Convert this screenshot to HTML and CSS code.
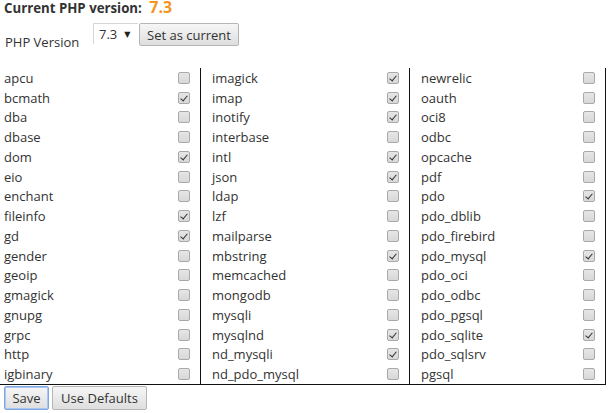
FILE: index.html
```html
<!DOCTYPE html>
<html>
<head>
<meta charset="utf-8">
<link rel="stylesheet" href="styles.css">
</head>
<body>
<div class="current"><span class="current-label">Current PHP version:</span> <span class="current-ver">7.3</span></div>
<div class="version-row">
  <span class="version-label">PHP Version</span>
  <span class="select">7.3<span class="arrow">&#9660;</span></span>
  <button class="btn">Set as current</button>
</div>
<div class="ext-table">
  <div class="col col1">
    <label class="ext"><span>apcu</span><input type="checkbox"></label>
    <label class="ext"><span>bcmath</span><input type="checkbox" checked></label>
    <label class="ext"><span>dba</span><input type="checkbox"></label>
    <label class="ext"><span>dbase</span><input type="checkbox"></label>
    <label class="ext"><span>dom</span><input type="checkbox" checked></label>
    <label class="ext"><span>eio</span><input type="checkbox"></label>
    <label class="ext"><span>enchant</span><input type="checkbox"></label>
    <label class="ext"><span>fileinfo</span><input type="checkbox" checked></label>
    <label class="ext"><span>gd</span><input type="checkbox" checked></label>
    <label class="ext"><span>gender</span><input type="checkbox"></label>
    <label class="ext"><span>geoip</span><input type="checkbox"></label>
    <label class="ext"><span>gmagick</span><input type="checkbox"></label>
    <label class="ext"><span>gnupg</span><input type="checkbox"></label>
    <label class="ext"><span>grpc</span><input type="checkbox"></label>
    <label class="ext"><span>http</span><input type="checkbox"></label>
    <label class="ext"><span>igbinary</span><input type="checkbox"></label>
  </div>
  <div class="col col2">
    <label class="ext"><span>imagick</span><input type="checkbox" checked></label>
    <label class="ext"><span>imap</span><input type="checkbox" checked></label>
    <label class="ext"><span>inotify</span><input type="checkbox" checked></label>
    <label class="ext"><span>interbase</span><input type="checkbox"></label>
    <label class="ext"><span>intl</span><input type="checkbox" checked></label>
    <label class="ext"><span>json</span><input type="checkbox" checked></label>
    <label class="ext"><span>ldap</span><input type="checkbox"></label>
    <label class="ext"><span>lzf</span><input type="checkbox"></label>
    <label class="ext"><span>mailparse</span><input type="checkbox"></label>
    <label class="ext"><span>mbstring</span><input type="checkbox" checked></label>
    <label class="ext"><span>memcached</span><input type="checkbox"></label>
    <label class="ext"><span>mongodb</span><input type="checkbox"></label>
    <label class="ext"><span>mysqli</span><input type="checkbox"></label>
    <label class="ext"><span>mysqlnd</span><input type="checkbox" checked></label>
    <label class="ext"><span>nd_mysqli</span><input type="checkbox" checked></label>
    <label class="ext"><span>nd_pdo_mysql</span><input type="checkbox"></label>
  </div>
  <div class="col col3">
    <label class="ext"><span>newrelic</span><input type="checkbox"></label>
    <label class="ext"><span>oauth</span><input type="checkbox"></label>
    <label class="ext"><span>oci8</span><input type="checkbox"></label>
    <label class="ext"><span>odbc</span><input type="checkbox"></label>
    <label class="ext"><span>opcache</span><input type="checkbox"></label>
    <label class="ext"><span>pdf</span><input type="checkbox"></label>
    <label class="ext"><span>pdo</span><input type="checkbox" checked></label>
    <label class="ext"><span>pdo_dblib</span><input type="checkbox"></label>
    <label class="ext"><span>pdo_firebird</span><input type="checkbox"></label>
    <label class="ext"><span>pdo_mysql</span><input type="checkbox" checked></label>
    <label class="ext"><span>pdo_oci</span><input type="checkbox"></label>
    <label class="ext"><span>pdo_odbc</span><input type="checkbox"></label>
    <label class="ext"><span>pdo_pgsql</span><input type="checkbox"></label>
    <label class="ext"><span>pdo_sqlite</span><input type="checkbox" checked></label>
    <label class="ext"><span>pdo_sqlsrv</span><input type="checkbox"></label>
    <label class="ext"><span>pgsql</span><input type="checkbox"></label>
  </div>
</div>
<div class="actions">
  <button class="btn btn-save">Save</button>
  <button class="btn btn-use">Use Defaults</button>
</div>
</body>
</html>
```

FILE: styles.css
```css
html, body {
  margin: 0;
  padding: 0;
  background: #fff;
}
body {
  font-family: "Open Sans", "DejaVu Sans", sans-serif;
  font-size: 13px;
  color: #333;
  width: 610px;
}
.current {
  padding: 1px 0 0 4px;
  height: 19px;
  line-height: 12px;
  white-space: nowrap;
}
.current-label {
  font-weight: 700;
  font-size: 13.25px;
  color: #333;
}
.current-ver {
  font-weight: 700;
  font-size: 16px;
  color: #f7941d;
  margin-left: 4px;
}
.version-row {
  display: flex;
  align-items: flex-start;
  padding-left: 5px;
  margin-top: 3px;
  height: 45px;
}
.version-label {
  margin-top: 10px;
  width: 88px;
}
.select {
  box-sizing: border-box;
  width: 45px;
  height: 21px;
  border: 1px solid #d6d6d6;
  border-right: none;
  border-bottom: none;
  background: #fff;
  padding-left: 5px;
  line-height: 19px;
  display: flex;
  align-items: center;
  gap: 7px;
}
.arrow {
  font-size: 8px;
  color: #222;
  line-height: 1;
}
.btn {
  font-family: "Open Sans", "DejaVu Sans", sans-serif;
  font-size: 13px;
  color: #333;
  box-sizing: border-box;
  height: 23px;
  padding: 0 7px;
  border: 1px solid #b5b5b5;
  border-radius: 2px;
  background: linear-gradient(#f6f6f6, #dedede);
  line-height: 20px;
  margin: 0 0 0 1px;
}
.ext-table {
  display: flex;
  border-bottom: 1px solid #111;
  width: 606px;
}
.col {
  display: flex;
  flex-direction: column;
  border-right: 1px solid #111;
  box-sizing: border-box;
  padding-right: 10px;
}
.col1 { width: 201px; padding-left: 4px; }
.col2 { width: 209px; padding-left: 11px; }
.col3 { width: 196px; padding-left: 11px; }
.ext {
  height: 19.75px;
  display: flex;
  align-items: center;
  justify-content: space-between;
  line-height: 18px;
}
.ext input {
  -webkit-appearance: none;
  appearance: none;
  margin: 0;
  width: 12px;
  height: 12px;
  box-sizing: border-box;
  border: 1px solid #a9a9a9;
  border-radius: 2px;
  background: linear-gradient(#e6e6e6, #d8d8d8);
  position: relative;
}
.ext input:checked::after {
  content: "";
  position: absolute;
  left: 3px;
  top: 1px;
  width: 3px;
  height: 6px;
  border: solid #333;
  border-width: 0 1.5px 1.5px 0;
  transform: rotate(40deg);
}
.actions {
  display: flex;
  padding: 1px 0 0 4px;
  gap: 3px;
}
.actions .btn { margin: 0; height: 24px; }
.btn-save {
  width: 45px;
  padding: 0;
  border: 1px solid #7ea6e0;
  box-shadow: inset 0 0 0 1px #a9c6ef;
}
.btn-use { width: 95px; padding: 0; }
```
